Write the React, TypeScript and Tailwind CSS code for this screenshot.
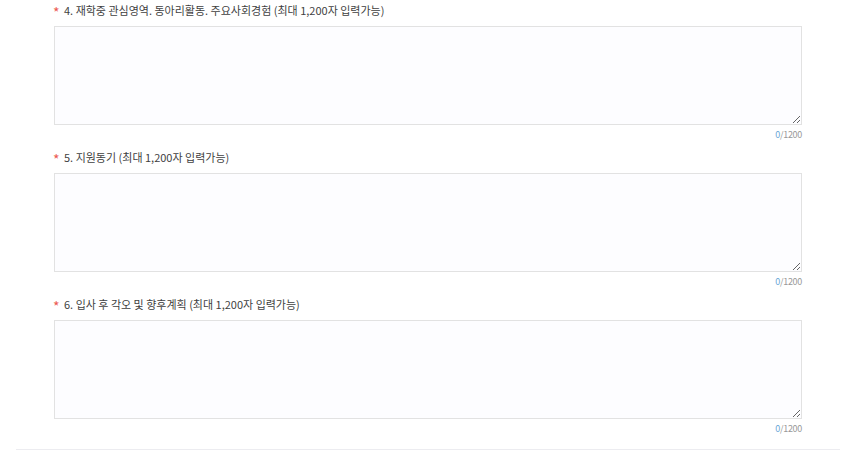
const questions = [
  '4. 재학중 관심영역. 동아리활동. 주요사회경험 (최대 1,200자 입력가능)',
  '5. 지원동기 (최대 1,200자 입력가능)',
  '6. 입사 후 각오 및 향후계획 (최대 1,200자 입력가능)',
];

function Question({ label }: { label: string }) {
  return (
    <div className="pl-[53px] pr-[54px] pb-[2px]">
      <div className="flex items-center h-[20px] leading-[20px] text-[11px] text-[#3f3f3f]">
        <span className="text-[#ec5a52] text-[14px] leading-[14px] pt-[4px] w-[11px]">*</span>
        <span>{label}</span>
      </div>
      <div className="pl-[1px] mt-[6px]">
        <textarea className="block w-full h-[99px] border border-[#e2e2e2] bg-[#fdfdff] outline-none" />
      </div>
      <div className="h-[20px] leading-[20px] text-right text-[9px] text-[#999] tracking-[-0.3px]">
        <span className="text-[#6aa7d8]">0</span>/1200
      </div>
    </div>
  );
}

export default function App() {
  return (
    <div
      className="w-[856px] h-[465px] bg-white"
      style={{ fontFamily: '"Noto Sans CJK KR", "Noto Sans", sans-serif' }}
    >
      {questions.map((q) => (
        <Question key={q} label={q} />
      ))}
      <div className="mx-[16px] mt-[8px] border-t border-[#ececf0]" />
    </div>
  );
}
